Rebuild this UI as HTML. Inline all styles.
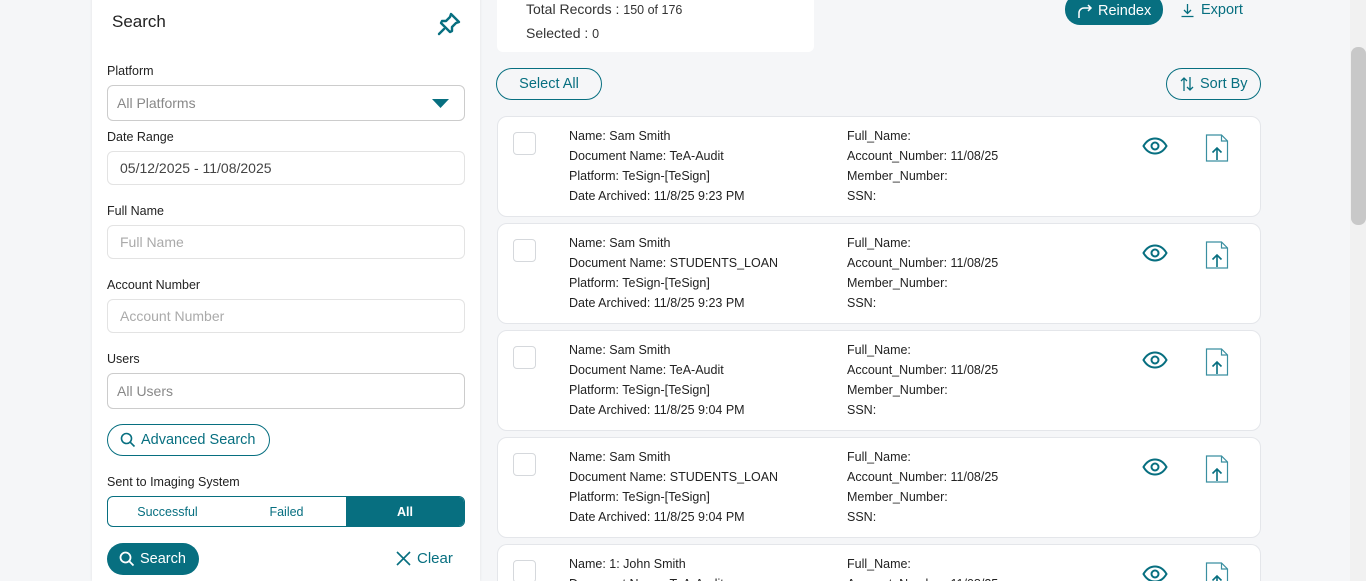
<!DOCTYPE html>
<html style="width:1366px;height:581px;overflow:hidden"><head><style>
*{box-sizing:border-box;margin:0;padding:0}
body{width:1366px;height:581px;overflow:hidden;background:#f5f6f8;font-family:"Liberation Sans",sans-serif;color:#222;position:relative}
.a{position:absolute}
.panel{left:92px;top:-10px;width:388px;height:591px;background:#fff;border-radius:10px 10px 0 0;box-shadow:0 0 3px rgba(0,0,0,.08)}
.lbl{font-size:12.5px;color:#222;left:107px}
.inp{left:107px;width:358px;border:1px solid #e3e3e3;border-radius:6px;background:#fff;font-size:14px;color:#999;padding-left:12px;display:flex;align-items:center}
.teal{color:#076f80}
.card{left:497px;width:764px;height:101px;background:#fff;border:1px solid #e4e6ea;border-radius:10px;overflow:hidden}
.cb{position:absolute;left:15px;top:15px;width:23px;height:23px;border:1px solid #d5d8dc;border-radius:4px}
.c1,.c2{position:absolute;top:9px;font-size:12.5px;line-height:20px;color:#222}
.c1{left:71px}.c2{left:349px}
.eye{position:absolute;left:644px;top:20px}
.file{position:absolute;left:707px;top:17px}
</style></head><body>
<div class="a panel"></div>
<div class="a" style="left:112px;top:12px;font-size:17px;color:#222">Search</div>
<svg class="a" style="left:436px;top:11px" width="26" height="26" viewBox="0 0 26 26" fill="none" stroke="#076f80" stroke-width="2.4" stroke-linejoin="round" stroke-linecap="round"><path d="M15 3l8 8-3 1-4 4 0 4-2 1-9-9 1-2 4 0 4-4z"/><path d="M8 18l-5 5"/></svg>
<div class="a lbl" style="top:64px">Platform</div>
<div class="a inp" style="top:85px;height:36px;border-color:#ccc;padding-left:9px;color:#888">All Platforms</div>
<svg class="a" style="left:432px;top:99px" width="17" height="10"><path d="M0 0h17L8.5 9z" fill="#076f80"/></svg>
<div class="a lbl" style="top:130px">Date Range</div>
<div class="a inp" style="top:151px;height:34px;color:#444">05/12/2025 - 11/08/2025</div>
<div class="a lbl" style="top:204px">Full Name</div>
<div class="a inp" style="top:225px;height:34px;color:#aaa">Full Name</div>
<div class="a lbl" style="top:278px">Account Number</div>
<div class="a inp" style="top:299px;height:34px;color:#aaa">Account Number</div>
<div class="a lbl" style="top:352px">Users</div>
<div class="a inp" style="top:373px;height:36px;border-color:#ccc;padding-left:9px;color:#888">All Users</div>
<div class="a teal" style="left:107px;top:424px;width:163px;height:32px;border:1px solid #076f80;border-radius:16px;font-size:14.5px;display:flex;align-items:center;padding-left:12px">
<svg width="16" height="16" viewBox="0 0 16 16" fill="none" stroke="#076f80" stroke-width="1.6"><circle cx="6.5" cy="6.5" r="5"/><path d="M10.3 10.3L14.5 14.5"/></svg><span style="margin-left:5px">Advanced Search</span></div>
<div class="a lbl" style="top:475px">Sent to Imaging System</div>
<div class="a" style="left:107px;top:496px;width:358px;height:31px;border:1px solid #076f80;border-radius:6px;overflow:hidden;display:flex;font-size:12.5px">
<div class="teal" style="width:119px;display:flex;align-items:center;justify-content:center">Successful</div>
<div class="teal" style="width:119px;display:flex;align-items:center;justify-content:center">Failed</div>
<div style="flex:1;background:#076f80;color:#fff;font-weight:bold;display:flex;align-items:center;justify-content:center">All</div></div>
<div class="a" style="left:107px;top:543px;width:92px;height:32px;background:#076f80;border-radius:16px;color:#fff;font-size:14.5px;display:flex;align-items:center;padding-left:12px">
<svg width="16" height="16" viewBox="0 0 16 16" fill="none" stroke="#fff" stroke-width="1.8"><circle cx="6.5" cy="6.5" r="5"/><path d="M10.3 10.3L14.5 14.5"/></svg><span style="margin-left:5px">Search</span></div>
<div class="a teal" style="left:396px;top:550px;font-size:15px;display:flex;align-items:center">
<svg width="15" height="15" viewBox="0 0 15 15" stroke="#076f80" stroke-width="1.6"><path d="M1 1l13 13M14 1L1 14"/></svg><span style="margin-left:6px">Clear</span></div>

<div class="a" style="left:497px;top:-10px;width:317px;height:62px;background:#fff;border-radius:6px"></div>
<div class="a" style="left:526px;top:1px;font-size:14px;color:#333">Total Records : <span style="font-size:12.5px">150 of 176</span></div>
<div class="a" style="left:526px;top:25px;font-size:14px;color:#333">Selected : <span style="font-size:12.5px">0</span></div>
<div class="a" style="left:1065px;top:-6px;width:98px;height:31px;background:#076f80;border-radius:15px;color:#fff;font-size:14.5px;display:flex;align-items:center;padding-left:12px;padding-top:2px">
<svg width="16" height="16" viewBox="0 0 16 16" fill="none" stroke="#fff" stroke-width="1.5"><path d="M2 15V10a5 5 0 0 1 5-5h7M11 2l3 3-3 3"/></svg><span style="margin-left:5px">Reindex</span></div>
<div class="a teal" style="left:1180px;top:2px;font-size:14.5px;display:flex;align-items:center">
<svg width="15" height="15" viewBox="0 0 15 15" fill="none" stroke="#076f80" stroke-width="1.3"><path d="M7.5 1v9M4 7l3.5 3.5L11 7M1.5 13.5h12"/></svg><span style="margin-left:6px">Export</span></div>
<div class="a teal" style="left:496px;top:68px;width:106px;height:32px;border:1px solid #076f80;border-radius:16px;font-size:14.5px;display:flex;align-items:center;justify-content:center">Select All</div>
<div class="a teal" style="left:1166px;top:68px;width:95px;height:32px;border:1px solid #076f80;border-radius:16px;font-size:14.5px;display:flex;align-items:center;padding-left:12px">
<svg width="16" height="16" viewBox="0 0 16 16" fill="none" stroke="#076f80" stroke-width="1.3"><path d="M5 15V2M2 5l3-3 3 3M11 1v13M8 11l3 3 3-3"/></svg><span style="margin-left:5px">Sort By</span></div>

<div class="a card" style="top:116px"><div class="cb"></div>
<div class="c1">Name: Sam Smith<br>Document Name: TeA-Audit<br>Platform: TeSign-[TeSign]<br>Date Archived: 11/8/25 9:23 PM</div>
<div class="c2">Full_Name:<br>Account_Number: 11/08/25<br>Member_Number:<br>SSN:</div>
<svg class="eye" width="26" height="18" viewBox="0 0 26 18" fill="none" stroke="#076f80" stroke-width="2"><path d="M1.5 9C5 3 9 1.5 13 1.5S21 3 24.5 9C21 15 17 16.5 13 16.5S5 15 1.5 9z"/><circle cx="13" cy="9" r="3.5"/></svg>
<svg class="file" width="24" height="28" viewBox="0 0 24 28" fill="none" stroke="#3a8fa0" stroke-width="1.2"><path d="M1.5 1h15l6 6v20h-21z"/><path d="M16.5 1v6h6"/><path d="M12 26V14M7.5 18.5L12 14l4.5 4.5" stroke="#076f80" stroke-width="1.6"/></svg></div>

<div class="a card" style="top:223px"><div class="cb"></div>
<div class="c1">Name: Sam Smith<br>Document Name: STUDENTS_LOAN<br>Platform: TeSign-[TeSign]<br>Date Archived: 11/8/25 9:23 PM</div>
<div class="c2">Full_Name:<br>Account_Number: 11/08/25<br>Member_Number:<br>SSN:</div>
<svg class="eye" width="26" height="18" viewBox="0 0 26 18" fill="none" stroke="#076f80" stroke-width="2"><path d="M1.5 9C5 3 9 1.5 13 1.5S21 3 24.5 9C21 15 17 16.5 13 16.5S5 15 1.5 9z"/><circle cx="13" cy="9" r="3.5"/></svg>
<svg class="file" width="24" height="28" viewBox="0 0 24 28" fill="none" stroke="#3a8fa0" stroke-width="1.2"><path d="M1.5 1h15l6 6v20h-21z"/><path d="M16.5 1v6h6"/><path d="M12 26V14M7.5 18.5L12 14l4.5 4.5" stroke="#076f80" stroke-width="1.6"/></svg></div>

<div class="a card" style="top:330px"><div class="cb"></div>
<div class="c1">Name: Sam Smith<br>Document Name: TeA-Audit<br>Platform: TeSign-[TeSign]<br>Date Archived: 11/8/25 9:04 PM</div>
<div class="c2">Full_Name:<br>Account_Number: 11/08/25<br>Member_Number:<br>SSN:</div>
<svg class="eye" width="26" height="18" viewBox="0 0 26 18" fill="none" stroke="#076f80" stroke-width="2"><path d="M1.5 9C5 3 9 1.5 13 1.5S21 3 24.5 9C21 15 17 16.5 13 16.5S5 15 1.5 9z"/><circle cx="13" cy="9" r="3.5"/></svg>
<svg class="file" width="24" height="28" viewBox="0 0 24 28" fill="none" stroke="#3a8fa0" stroke-width="1.2"><path d="M1.5 1h15l6 6v20h-21z"/><path d="M16.5 1v6h6"/><path d="M12 26V14M7.5 18.5L12 14l4.5 4.5" stroke="#076f80" stroke-width="1.6"/></svg></div>

<div class="a card" style="top:437px"><div class="cb"></div>
<div class="c1">Name: Sam Smith<br>Document Name: STUDENTS_LOAN<br>Platform: TeSign-[TeSign]<br>Date Archived: 11/8/25 9:04 PM</div>
<div class="c2">Full_Name:<br>Account_Number: 11/08/25<br>Member_Number:<br>SSN:</div>
<svg class="eye" width="26" height="18" viewBox="0 0 26 18" fill="none" stroke="#076f80" stroke-width="2"><path d="M1.5 9C5 3 9 1.5 13 1.5S21 3 24.5 9C21 15 17 16.5 13 16.5S5 15 1.5 9z"/><circle cx="13" cy="9" r="3.5"/></svg>
<svg class="file" width="24" height="28" viewBox="0 0 24 28" fill="none" stroke="#3a8fa0" stroke-width="1.2"><path d="M1.5 1h15l6 6v20h-21z"/><path d="M16.5 1v6h6"/><path d="M12 26V14M7.5 18.5L12 14l4.5 4.5" stroke="#076f80" stroke-width="1.6"/></svg></div>

<div class="a card" style="top:544px;height:37px;border-bottom:none;border-radius:10px 10px 0 0"><div class="cb"></div>
<div class="c1">Name: 1: John Smith<br>Document Name: TeA-Audit<br>Platform: TeSign-[TeSign]<br>Date Archived: 11/8/25 9:04 PM</div>
<div class="c2">Full_Name:<br>Account_Number: 11/08/25<br>Member_Number:<br>SSN:</div>
<svg class="eye" style="top:20px" width="26" height="18" viewBox="0 0 26 18" fill="none" stroke="#076f80" stroke-width="2"><path d="M1.5 9C5 3 9 1.5 13 1.5S21 3 24.5 9C21 15 17 16.5 13 16.5S5 15 1.5 9z"/><circle cx="13" cy="9" r="3.5"/></svg>
<svg class="file" width="24" height="28" viewBox="0 0 24 28" fill="none" stroke="#3a8fa0" stroke-width="1.2"><path d="M1.5 1h15l6 6v20h-21z"/><path d="M16.5 1v6h6"/><path d="M12 26V14M7.5 18.5L12 14l4.5 4.5" stroke="#076f80" stroke-width="1.6"/></svg></div>

<div class="a" style="left:1350px;top:0;width:16px;height:581px;background:#f1f1f1"></div>
<div class="a" style="left:1351px;top:47px;width:15px;height:178px;background:#c8c8c8;border-radius:7px"></div>
</body></html>
